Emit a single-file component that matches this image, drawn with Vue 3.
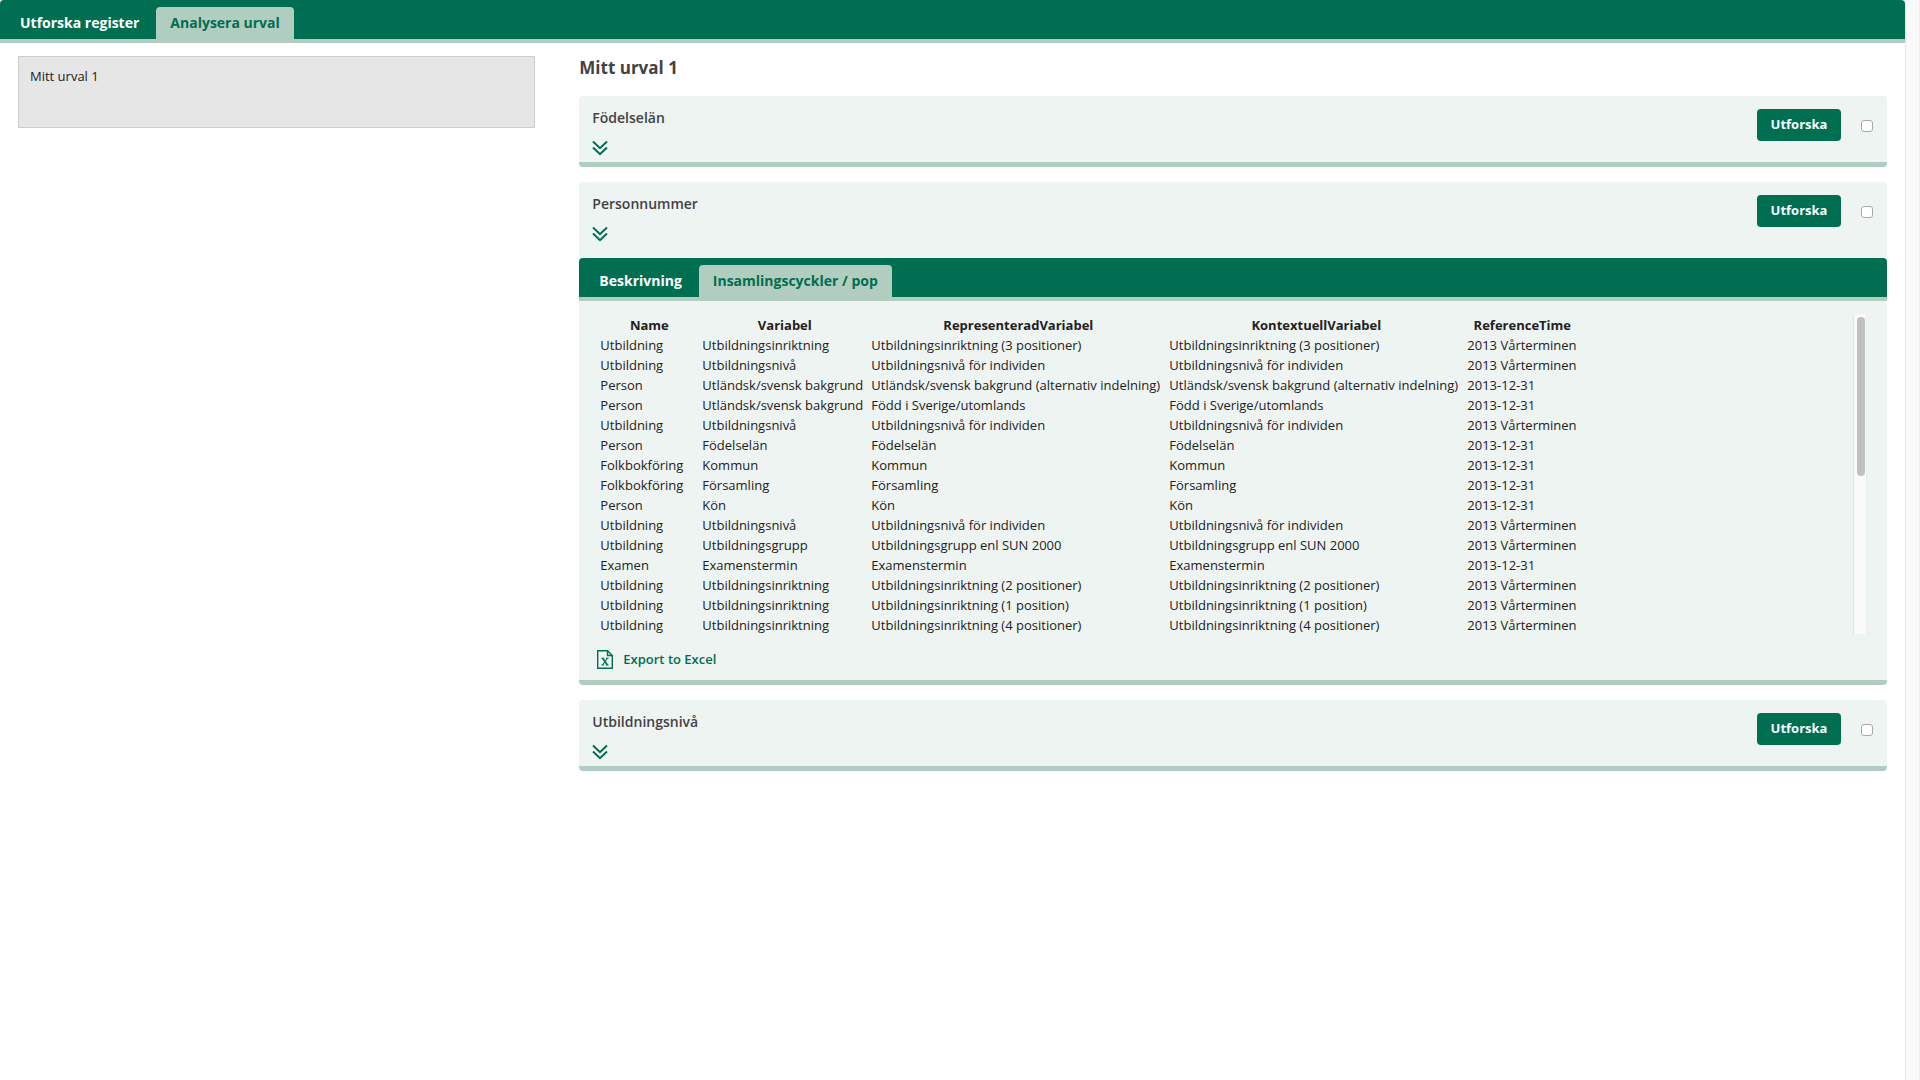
<script setup>
import { ref } from 'vue'

const mainTab = ref('analyze')
const detailTab = ref('cycles')

const variables = ref([
  { id: 'fodelselan', title: 'Födelselän', open: false, checked: false },
  { id: 'personnummer', title: 'Personnummer', open: true, checked: false },
  { id: 'utbildningsniva', title: 'Utbildningsnivå', open: false, checked: false },
])

const columns = ['Name', 'Variabel', 'RepresenteradVariabel', 'KontextuellVariabel', 'ReferenceTime']

const term = '2013 Vårterminen'
const date = '2013-12-31'
const rows = [
  ['Utbildning', 'Utbildningsinriktning', 'Utbildningsinriktning (3 positioner)', 'Utbildningsinriktning (3 positioner)', term],
  ['Utbildning', 'Utbildningsnivå', 'Utbildningsnivå för individen', 'Utbildningsnivå för individen', term],
  ['Person', 'Utländsk/svensk bakgrund', 'Utländsk/svensk bakgrund (alternativ indelning)', 'Utländsk/svensk bakgrund (alternativ indelning)', date],
  ['Person', 'Utländsk/svensk bakgrund', 'Född i Sverige/utomlands', 'Född i Sverige/utomlands', date],
  ['Utbildning', 'Utbildningsnivå', 'Utbildningsnivå för individen', 'Utbildningsnivå för individen', term],
  ['Person', 'Födelselän', 'Födelselän', 'Födelselän', date],
  ['Folkbokföring', 'Kommun', 'Kommun', 'Kommun', date],
  ['Folkbokföring', 'Församling', 'Församling', 'Församling', date],
  ['Person', 'Kön', 'Kön', 'Kön', date],
  ['Utbildning', 'Utbildningsnivå', 'Utbildningsnivå för individen', 'Utbildningsnivå för individen', term],
  ['Utbildning', 'Utbildningsgrupp', 'Utbildningsgrupp enl SUN 2000', 'Utbildningsgrupp enl SUN 2000', term],
  ['Examen', 'Examenstermin', 'Examenstermin', 'Examenstermin', date],
  ['Utbildning', 'Utbildningsinriktning', 'Utbildningsinriktning (2 positioner)', 'Utbildningsinriktning (2 positioner)', term],
  ['Utbildning', 'Utbildningsinriktning', 'Utbildningsinriktning (1 position)', 'Utbildningsinriktning (1 position)', term],
  ['Utbildning', 'Utbildningsinriktning', 'Utbildningsinriktning (4 positioner)', 'Utbildningsinriktning (4 positioner)', term],
]
</script>

<template>
  <div class="page">
    <div class="content">
      <nav class="tabs">
        <button class="tab" :class="{ active: mainTab === 'explore' }" @click="mainTab = 'explore'">Utforska register</button>
        <button class="tab" :class="{ active: mainTab === 'analyze' }" @click="mainTab = 'analyze'">Analysera urval</button>
      </nav>

      <div class="columns">
        <aside class="selections">
          <button class="selection">Mitt urval 1</button>
        </aside>

        <main class="details">
          <h1>Mitt urval 1</h1>

          <section v-for="item in variables" :key="item.id" class="card">
            <div class="card-head" :class="{ open: item.open }">
              <div class="card-title">
                <h2 :id="item.id">{{ item.title }}</h2>
                <button class="expand" aria-label="Visa mer" @click="item.open = !item.open">
                  <svg width="16" height="16" viewBox="0 0 16 16" fill="none" stroke="currentColor" stroke-width="2">
                    <path d="M1 1.5 8 8.2 15 1.5M1 7.5 8 14.2 15 7.5" />
                  </svg>
                </button>
              </div>
              <button class="explore">Utforska</button>
              <input v-model="item.checked" type="checkbox" :aria-labelledby="item.id" />
            </div>

            <template v-if="item.open">
              <nav class="tabs">
                <button class="tab" :class="{ active: detailTab === 'description' }" @click="detailTab = 'description'">Beskrivning</button>
                <button class="tab" :class="{ active: detailTab === 'cycles' }" @click="detailTab = 'cycles'">Insamlingscyckler / pop</button>
              </nav>
              <div class="panel">
                <div class="scroll-area">
                  <div class="table-wrap">
                    <table>
                      <thead>
                        <tr><th v-for="c in columns" :key="c" scope="col">{{ c }}</th></tr>
                      </thead>
                      <tbody>
                        <tr v-for="(row, i) in rows" :key="i">
                          <td v-for="(cell, j) in row" :key="j">{{ cell }}</td>
                        </tr>
                      </tbody>
                    </table>
                  </div>
                  <div class="scroll-track"><div class="scroll-thumb"></div></div>
                </div>
                <a href="#" class="export">
                  <svg width="16" height="19" viewBox="0 0 16 19" fill="none" stroke="currentColor">
                    <path stroke-width="1.4" d="M.7.7H10.5L15.3 5.5V18.3H.7ZM10.5.7V5.5H15.3" />
                    <path stroke-width="1.6" d="M5.6 8.2 10.4 15" />
                    <path stroke-width="1.1" d="M10.4 8.2 5.6 15M4.4 8.2H7.2M9 8.2H11.6M4.4 15H7M8.8 15H11.6" />
                  </svg>
                  Export to Excel
                </a>
              </div>
            </template>
          </section>
        </main>
      </div>
    </div>
    <div class="page-scrollbar"></div>
  </div>
</template>

<style>
body {
  background: #fff;
}
</style>

<style scoped>
.page {
  display: flex;
  min-height: 100vh;
  font-family: "Open Sans", sans-serif;
  font-size: 13px;
  color: #212121;
}
.page * {
  box-sizing: border-box;
}
button {
  margin: 0;
  border: 0;
  font-family: inherit;
  cursor: pointer;
}
.content {
  flex: 1;
  min-width: 0;
}
.page-scrollbar {
  width: 15px;
  background: #fafafa;
  border-left: 1px solid #e7e7e7;
  border-right: 1px solid #ededed;
}
.tabs {
  display: flex;
  align-items: flex-end;
  gap: 3px;
  height: 43px;
  padding: 0 6px;
  background: #006e50;
  border-bottom: 4px solid #b0cdbf;
  border-radius: 4px 4px 0 0;
}
.tab {
  height: 32px;
  padding: 0 14px;
  background: none;
  border-radius: 4px 4px 0 0;
  color: #fff;
  font-size: 14px;
  font-weight: 700;
  line-height: 20px;
  white-space: nowrap;
}
.tab.active {
  background: #b0cdbf;
  color: #006e50;
}
.columns {
  display: flex;
  padding: 13px 18px;
}
.selections {
  flex: 0 0 28%;
  padding-right: 6px;
}
.selection {
  display: flex;
  width: 100%;
  height: 72px;
  padding: 9px 11px;
  background: #e6e6e6;
  border: 1px solid #cdcdcd;
  color: #212121;
  font-size: 13px;
  line-height: 20px;
}
.details {
  flex: 1;
  min-width: 0;
  margin-left: 38px;
}
h1 {
  margin: 0 0 16px;
  color: #424242;
  font-size: 17px;
  font-weight: 700;
  line-height: 24px;
}
.card {
  margin-bottom: 15px;
  background: #eef4f2;
  border-bottom: 5px solid #b0cdbf;
  border-radius: 4px;
}
.card-head {
  display: flex;
  align-items: flex-start;
  height: 66px;
  padding: 13px 14px 0 13px;
}
.card-head.open {
  height: 76px;
}
.card-title {
  flex: 1;
}
h2 {
  margin: 0;
  color: #424242;
  font-size: 14px;
  font-weight: 600;
  line-height: 18px;
}
.expand {
  display: block;
  margin-top: 13px;
  padding: 0;
  background: none;
  color: #006e50;
}
.expand svg {
  display: block;
}
.explore {
  width: 84px;
  height: 32px;
  padding: 0 0 2px;
  background: #006e50;
  border-radius: 4px;
  color: #fff;
  font-size: 13px;
  font-weight: 700;
}
input[type="checkbox"] {
  appearance: none;
  width: 12px;
  height: 12px;
  margin: 11px 0 0 20px;
  background: #fff;
  border: 1px solid #a8a8a8;
  border-radius: 3px;
}
input[type="checkbox"]:checked {
  background: #006e50;
}
.panel {
  padding: 13px 20px 11px 18px;
}
.scroll-area {
  display: flex;
  height: 320px;
}
.table-wrap {
  flex: 1;
  min-width: 0;
  overflow: hidden;
}
table {
  border-spacing: 2px;
}
th,
td {
  padding: 1px;
  line-height: 16px;
  white-space: nowrap;
}
th {
  font-weight: 700;
}
th:nth-child(1) {
  min-width: 100px;
}
th:nth-child(2) {
  min-width: 167px;
}
th:nth-child(3),
th:nth-child(4) {
  min-width: 296px;
}
th:nth-child(5) {
  min-width: 112px;
}
.scroll-track {
  width: 14px;
  padding: 3px 2px 0 3px;
  background: #fafafa;
  border-left: 1px solid #e7e7e7;
  border-right: 1px solid #ededed;
}
.scroll-thumb {
  width: 8px;
  height: 159px;
  background: #c1c1c1;
  border-radius: 4px;
}
.export {
  display: flex;
  align-items: center;
  gap: 10px;
  width: fit-content;
  margin-top: 15px;
  color: #006e50;
  font-size: 13px;
  font-weight: 600;
  line-height: 20px;
  text-decoration: none;
}
</style>
